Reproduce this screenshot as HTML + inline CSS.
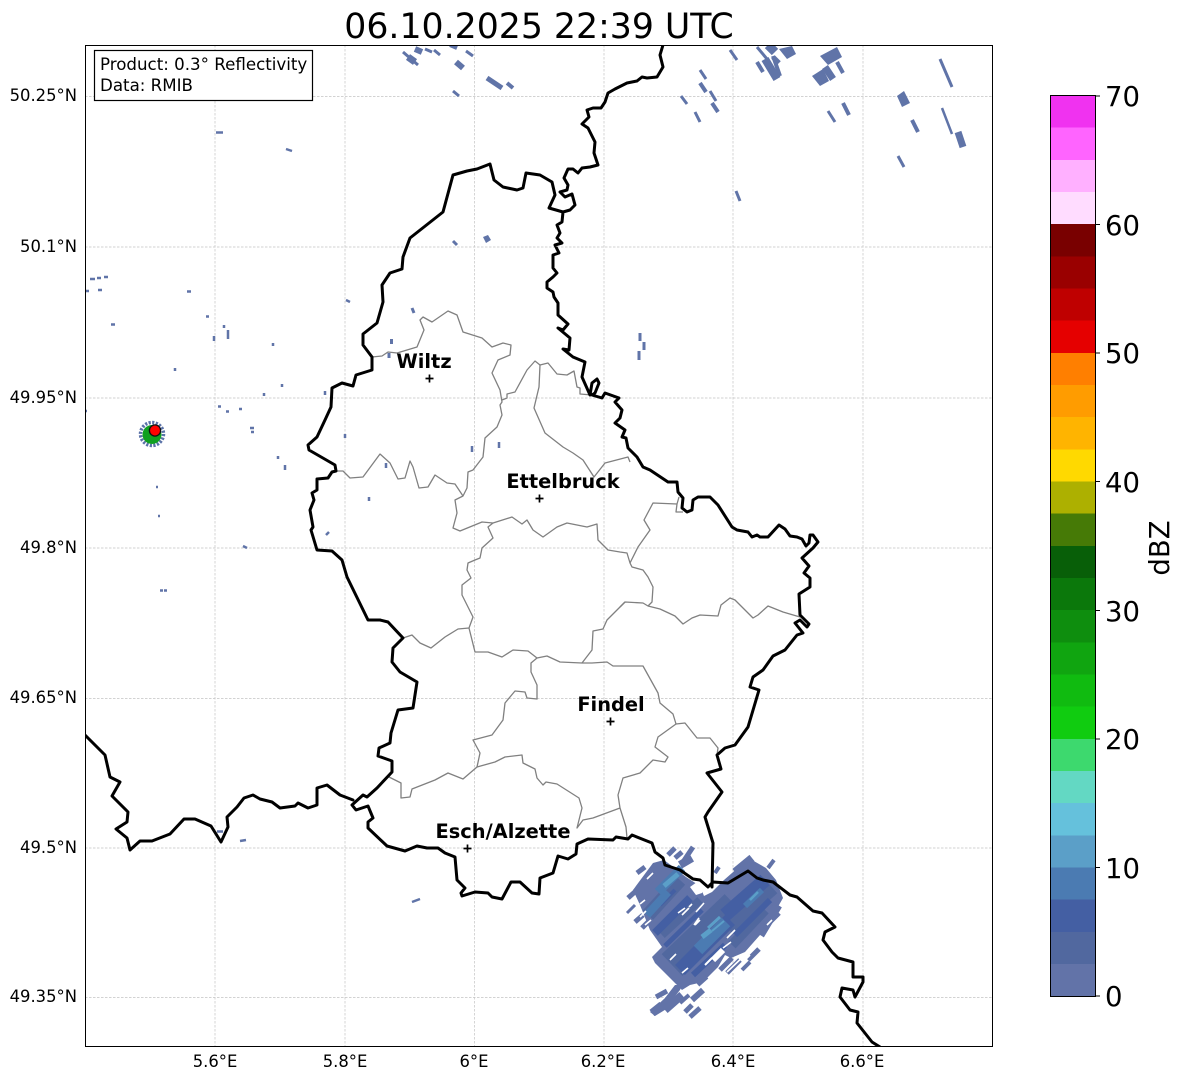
<!DOCTYPE html>
<html><head><meta charset="utf-8"><style>
html,body{margin:0;padding:0;background:#fff}
svg{display:block;font-family:"DejaVu Sans",sans-serif}
</style></head><body>
<svg width="1184" height="1081" viewBox="0 0 1184 1081" xmlns="http://www.w3.org/2000/svg">
<defs><clipPath id="ax"><rect x="85" y="45" width="907" height="1001"/></clipPath></defs>
<rect width="1184" height="1081" fill="#fff"/>
<text x="539" y="38" font-size="34.7" text-anchor="middle">06.10.2025 22:39 UTC</text>
<g clip-path="url(#ax)">
<!-- grid -->
<g stroke="#c4c4c4" stroke-width="0.7" stroke-dasharray="2.5 1.5" fill="none">
<path d="M215,45V1046M345,45V1046M474.5,45V1046M604,45V1046M733,45V1046M863,45V1046"/>
<path d="M85,96.5H992M85,247H992M85,398H992M85,548H992M85,698.5H992M85,848H992M85,997.5H992"/>
</g>
<!-- radar: top streaks -->
<g stroke="#6074a8" fill="none">
<g stroke-width="3">
<path d="M730,50L737,60M700,70L706,79M710,91L716,101M681,96L687,104M695,112L700,122M757,47L767,59M828,111L835,122M898,156L904,167M736,191L740,201M940,59L952,87M403,52L418,65M434,50L440,55M466,51L473,56M453,91L459,96"/>
</g>
<g stroke-width="4">
<path d="M700,83L706,92M712,103L718,112M757,62L763,72M773,56L780,76M837,62L843,73M843,103L849,115M912,120L918,132M450,45L457,48M507,83L513,88"/>
</g>
<path d="M765,59L777,79" stroke-width="8"/>
<path d="M768,45L775,52" stroke-width="9"/>
<path d="M773,57L779,63" stroke-width="5"/>
<path d="M825,67L833,79" stroke-width="7"/>
<path d="M942,108L952,134" stroke-width="2.5"/>
<path d="M958,132L963,147" stroke-width="7"/>
<path d="M408,57L415,62" stroke-width="7"/>
<path d="M415,49L422,52" stroke-width="6"/>
<path d="M425,49L432,52" stroke-width="3"/>
<path d="M456,62L463,68" stroke-width="6"/>
<path d="M487,78L502,88" stroke-width="5"/>
<path d="M453,241L457,245" stroke-width="3"/>
</g>
<g fill="#6074a8">
<polygon points="779,49 792,46 796,54 787,59"/>
<polygon points="820,56 837,47 842,57 828,65"/>
<polygon points="812,76 823,69 829,81 820,86"/>
<polygon points="897,96 904,91 910,103 902,107"/>
<polygon points="483,237 488,235 491,240 486,243"/>
</g>
<!-- scattered pixels -->
<g stroke="#6074a8" stroke-width="2.5" fill="none">
<path d="M216,132.5H223M286,149L292,151M90,279H95M97,278H101M104,277H108M85,291H89M98,290H102M111,324.5H115M187,291.5H191M206,316.5H209M224,325V328M228,330V339M214,336V341M273,343V346M346,300L350,302M175,368V371M282,384V387M264,393V396M218,406.5H221M226,411.5H229M239,409H242M250,428H254M251,432H254M278,456V459M285,465V470M156,487H158M158,516H160M243,546L247,548M160,590.5H163M164,590.5H167M85,411H87"/>
<path d="M325,391V395M345,434V438M472,446V452M499,442V448M386,463V468M369,497V501M326,535L329,532M217,831.5H223M240,841L246,840M412,902L420,899"/>
<path d="M412,308L414,313M391.5,339V344M389,353V358M640,333V341M644,342V350M639,351V360" stroke-width="3"/>
</g>
<!-- heart echo -->
<polygon fill="#6273a8" points="653,863 664,860 672,866 686,877 700,886 704,896 712,892 724,880 740,866 752,860 766,868 776,880 783,898 775,912 760,935 745,952 731,958 725,955 718,967 703,982 690,985 682,990 672,980 655,963 652,957 662,947 650,930 640,905 633,890"/>
<polygon fill="#6273a8" points="682,985 680,990 672,1000 668,1008 655,1016 650,1012 665,998 675,985"/>
<g stroke="#6273a8" fill="none">
<g stroke-width="5">
<path d="M637,873L645,867M628,898L637,890M635,922L643,915M642,928L648,922M668,855L675,848M675,858L682,852M683,862L693,847M770,922L779,913M748,960L759,949M727,973L740,960M720,970L732,958M656,997L667,991M690,1017L700,1008M685,1012L692,1005"/>
</g>
<path d="M627,913L635,905" stroke-width="3"/>
<path d="M680,865L692,858M735,872L752,858M652,1013L662,1005M665,1010L682,995" stroke-width="8"/>
<path d="M715,873L719,867M768,868L774,860M742,970L750,962M698,985L707,977M680,1003L689,995" stroke-width="4"/>
<path d="M692,1000L703,990" stroke-width="6"/>
<path d="M645,883L655,875M760,935L778,905" stroke-width="9"/>
</g>
<g stroke="#51689f" fill="none">
<path d="M648,915L680,880" stroke-width="14"/>
<path d="M662,935L700,900" stroke-width="8"/>
<path d="M672,965L735,905" stroke-width="30"/>
<path d="M725,925L770,885" stroke-width="22"/>
<path d="M732,945L765,910" stroke-width="10"/>
</g>
<g stroke="#445fa3" fill="none">
<path d="M655,933L690,898" stroke-width="8"/>
<path d="M665,946L702,910" stroke-width="5"/>
<path d="M680,970L730,920" stroke-width="14"/>
<path d="M660,905L675,890" stroke-width="4"/>
<path d="M725,915L765,880" stroke-width="14"/>
<path d="M735,935L770,900" stroke-width="6"/>
<path d="M693,975L725,945" stroke-width="6"/>
</g>
<g stroke="#4b7bb2" fill="none">
<path d="M647,915L668,892" stroke-width="8"/>
<path d="M658,892L682,868" stroke-width="9"/>
<path d="M698,950L726,922" stroke-width="12"/>
<path d="M745,906L762,890" stroke-width="6"/>
</g>
<g stroke="#5b9fc8" fill="none">
<path d="M664,886L678,874" stroke-width="5"/>
<path d="M708,928L720,917" stroke-width="3"/>
<path d="M712,931L724,921" stroke-width="2"/>
<path d="M702,937L711,930" stroke-width="5"/>
<path d="M750,900L758,892" stroke-width="2.5"/>
</g>
<polygon fill="#fff" points="690,887 697,882 704,888 702,893 696,895"/>
<g stroke="#fff" fill="none" stroke-width="1.6">
<path d="M678,913L685,908M695,925L700,920M682,915L689,908M696,912L704,903M727,938L735,930M723,948L731,942M682,973L688,968M727,972L747,953M733,972L750,955M767,925L772,920M647,879L653,873M640,904L645,900M645,925L651,920M640,917L646,911M670,960L676,954M703,890L708,885M694,925L699,918M689,907L692,904"/>
<path d="M713,960L723,950" stroke-width="6"/>
<path d="M705,965L712,958" stroke-width="2"/>
</g>
<!-- radar marker -->
<circle cx="152" cy="434" r="11.5" fill="none" stroke="#5a72a8" stroke-width="3.5" stroke-dasharray="2.2 1.4"/>
<circle cx="152" cy="434.5" r="9.5" fill="#10a020"/>
<circle cx="155" cy="430.5" r="5.6" fill="#f00" stroke="#111" stroke-width="1.3"/>
<!-- admin borders -->
<g fill="none" stroke="#808080" stroke-width="1.3" stroke-linejoin="round">
<path d="M372,357L382,356 388,352 397,353 417,347 424,330 420,320 423,317 432,322 448,311 457,315 463,332 482,338 492,347 503,343 511,345 510,355 498,360 492,373 500,390 502,402 500,405 502,415 497,427 485,438 483,457 473,470 468,472 467,488 463,496 455,500 457,513 453,528 460,531 482,522 493,523 512,517 522,524 527,520 533,530 543,537 557,527 567,523 587,527 597,524 598,540 608,550 620,552 627,553 630,563 632,567 643,570 648,577 653,587 652,602 648,606"/>
<path d="M336,471L343,471 350,478 363,477 380,454 390,463 398,479 405,478 410,461 413,467 419,488 428,487 435,475 447,483 455,484 463,496"/>
<path d="M502,400L507,398 507,394 515,392 527,370 535,361 540,365 548,363 557,374 567,375 574,371 577,387 580,388 580,394 592,395"/>
<path d="M540,365L539,387 534,408 545,433 563,447 573,453 583,460 594,477 605,463 628,457 630,462"/>
<path d="M630,563L638,547 650,530 644,520 653,503 677,504 676,512 683,512M677,504L679,497"/>
<path d="M620,607L625,602 643,603 648,606 660,609 675,616 683,624 692,618 700,615 718,616 721,605 730,598 735,600 753,618 758,615 768,606 783,612 800,617"/>
<path d="M493,523L488,527 493,538 482,548 480,558 475,560 468,563 467,570 471,578 462,585 462,595 473,617 469,628 458,629 445,637 431,648 420,643 412,635 403,638M469,628L475,652 488,652 502,657 513,650 528,651 537,658 547,656 560,662 582,663 592,663 607,662 613,666 643,666 658,693 660,703 673,714 676,724 685,723 697,738 710,738 718,748 717,755"/>
<path d="M676,724L658,737 655,747 668,757 665,762 653,760 640,773 623,778 618,795 620,808 626,827 627,838"/>
<path d="M620,808L593,818 583,820 577,828 582,808 579,798 557,784 546,782 543,785 537,778 535,769 523,763 522,755 505,757 495,762 477,767 480,753 473,740 492,735 503,720 505,703 515,691 525,692 527,698 537,699 537,685 531,672 531,663 537,658"/>
<path d="M477,767L463,779 448,773 435,780 412,789 410,797 401,798 401,783 389,777"/>
<path d="M582,663L592,650 593,631 603,629 607,620 625,602"/>
</g>
<!-- national borders -->
<g fill="none" stroke="#000" stroke-width="3" stroke-linejoin="round" stroke-linecap="round">
<path d="M85,735L105,755 110,777 120,782 112,796 128,812 127,822 116,829 127,838 130,850 140,841 152,841 170,834 184,819 195,819 211,826 221,842 228,827 227,817 237,807 244,798 253,795 260,799 272,802 280,808 295,806 298,803 308,808 317,805 317,788 327,785 340,795 353,800"/>
<path d="M563,212L549,208 555,195 552,182 540,175 526,173 523,188 517,190 503,187 494,180 490,164 477,169 467,171 453,175 443,212 410,238 403,257 402,269 390,273 382,285 383,302 377,323 363,334 363,345 372,357 372,370 356,375 353,386 342,383 332,388 331,407 325,420 317,437 308,445 309,450 335,465 336,471 332,472 328,478 317,479 317,490 312,493 314,500 310,510 313,527 311,530 317,550 332,551 342,560 347,577 368,620 380,620 388,622 403,638 393,648 392,662 400,672 417,682 413,708 398,710 391,733 390,743 379,748 378,756 392,761 392,772 377,788 367,797 363,795 352,805 356,810 368,806 373,818 368,822 368,828 387,846 405,851 417,846 427,848 438,848 445,853 455,857 457,880 465,888 461,893 462,896 475,892 488,893 492,897 502,899 511,882 520,882 532,893 539,894 540,878 553,873 558,856 568,859 576,854 577,844 588,839 613,840 616,837 628,839 632,835 652,843 655,852 663,858 665,865 680,870 693,879 700,880 708,887 713,882 728,883 748,871 757,878 763,880 773,882 790,895 797,897 813,911 822,913 835,927 825,932 823,940 832,952 838,958 853,962 853,977 863,977 863,982 855,997 853,990 842,988 840,997 850,1010 858,1012 857,1023 872,1042 880,1047"/>
<path d="M712,887L713,843 705,817 708,812 722,792 707,773 721,769 717,755 725,748 735,745 748,727 759,690 750,687 753,677 763,670 773,656 785,650 797,635 803,633 795,623 800,620 807,627 809,624 800,615 799,594 810,587 810,578 804,573 809,566 802,558 813,548 818,542 813,535 810,535 809,543 806,546 802,539 797,537 790,536 785,529 779,525 768,537 760,537 757,535 752,537 748,532 737,530 732,527 718,505 710,497 698,497 693,500 692,510 687,512 682,508 683,498 678,492 677,482 668,482 650,470 643,467 637,457 628,448 626,438 622,437 625,430 615,423 620,418 622,410 615,402 619,398 605,393 602,398 592,395 595,393 599,383 597,379 592,383 590,395 582,377 585,362 573,357 563,349 569,350 570,338 558,328 563,330 568,324 558,315 558,303 554,297 553,292 547,288 547,282 553,277 557,273 553,268 553,255 559,253 555,245 562,243 557,238 560,233 557,225 562,222 563,212 570,210 575,205 572,194 565,197 560,192 567,190 568,185 564,178 568,169 573,169 578,173 582,168 590,167 598,165 594,153 595,142 588,128 582,124 589,117 587,110 593,108 601,108 605,102 608,93 615,89 627,83 637,81 642,77 647,78 657,77 663,67 660,55 663,45"/>
</g>
<!-- cities -->
<g stroke="#000" stroke-width="1.7" fill="none">
<path d="M425.5,378.5H433.5M429.5,374.5V382.5"/>
<path d="M535.5,498.5H543.5M539.5,494.5V502.5"/>
<path d="M606.5,721.5H614.5M610.5,717.5V725.5"/>
<path d="M463.5,848.5H471.5M467.5,844.5V852.5"/>
</g>
<g font-size="19.4" font-weight="bold" text-anchor="middle">
<text x="424" y="368">Wiltz</text>
<text x="563" y="488">Ettelbruck</text>
<text x="611" y="711">Findel</text>
<text x="503" y="838">Esch/Alzette</text>
</g>
<!-- legend -->
<rect x="94.5" y="50.5" width="218" height="50" fill="#fff" stroke="#000" stroke-width="1.2"/>
<text x="100" y="70" font-size="16.67">Product: 0.3° Reflectivity</text>
<text x="100" y="91" font-size="16.67">Data: RMIB</text>
</g>
<rect x="85.5" y="45.5" width="907" height="1001" fill="none" stroke="#000" stroke-width="1"/>
<!-- tick labels -->
<g font-size="16.4" text-anchor="end">
<text x="77" y="101">50.25°N</text>
<text x="77" y="252">50.1°N</text>
<text x="77" y="403">49.95°N</text>
<text x="77" y="553">49.8°N</text>
<text x="77" y="703">49.65°N</text>
<text x="77" y="853">49.5°N</text>
<text x="77" y="1002">49.35°N</text>
</g>
<g font-size="16.4" text-anchor="middle">
<text x="215" y="1067">5.6°E</text>
<text x="345" y="1067">5.8°E</text>
<text x="474" y="1067">6°E</text>
<text x="603" y="1067">6.2°E</text>
<text x="733" y="1067">6.4°E</text>
<text x="862" y="1067">6.6°E</text>
</g>
<!-- colorbar -->
<g shape-rendering="crispEdges">
<rect x="1050" y="95.5" width="45.5" height="32.5" fill="#f032f0"/>
<rect x="1050" y="127.7" width="45.5" height="32.5" fill="#ff64ff"/>
<rect x="1050" y="159.9" width="45.5" height="32.5" fill="#ffb0ff"/>
<rect x="1050" y="192" width="45.5" height="32.5" fill="#ffdcff"/>
<rect x="1050" y="224.2" width="45.5" height="32.5" fill="#790000"/>
<rect x="1050" y="256.4" width="45.5" height="32.5" fill="#9a0000"/>
<rect x="1050" y="288.5" width="45.5" height="32.5" fill="#bf0000"/>
<rect x="1050" y="320.7" width="45.5" height="32.5" fill="#e50000"/>
<rect x="1050" y="352.9" width="45.5" height="32.5" fill="#ff7f00"/>
<rect x="1050" y="385" width="45.5" height="32.5" fill="#ff9c00"/>
<rect x="1050" y="417.2" width="45.5" height="32.5" fill="#ffb400"/>
<rect x="1050" y="449.4" width="45.5" height="32.5" fill="#ffd900"/>
<rect x="1050" y="481.5" width="45.5" height="32.5" fill="#adb000"/>
<rect x="1050" y="513.7" width="45.5" height="32.5" fill="#467a06"/>
<rect x="1050" y="545.9" width="45.5" height="32.5" fill="#085f08"/>
<rect x="1050" y="578" width="45.5" height="32.5" fill="#0b780b"/>
<rect x="1050" y="610.2" width="45.5" height="32.5" fill="#0e8e0e"/>
<rect x="1050" y="642.4" width="45.5" height="32.5" fill="#10a510"/>
<rect x="1050" y="674.5" width="45.5" height="32.5" fill="#10bb10"/>
<rect x="1050" y="706.7" width="45.5" height="32.5" fill="#10cc10"/>
<rect x="1050" y="738.9" width="45.5" height="32.5" fill="#3dd96e"/>
<rect x="1050" y="771" width="45.5" height="32.5" fill="#63d8c3"/>
<rect x="1050" y="803.2" width="45.5" height="32.5" fill="#65c1dc"/>
<rect x="1050" y="835.4" width="45.5" height="32.5" fill="#5b9fc8"/>
<rect x="1050" y="867.5" width="45.5" height="32.5" fill="#4b7bb2"/>
<rect x="1050" y="899.7" width="45.5" height="32.5" fill="#445fa3"/>
<rect x="1050" y="931.9" width="45.5" height="32.5" fill="#51689f"/>
<rect x="1050" y="964" width="45.5" height="32" fill="#6273a8"/>
</g>
<rect x="1050.5" y="95.5" width="45" height="901" fill="none" stroke="#000" stroke-width="1"/>
<path d="M1095,96H1100M1095,224.5H1100M1095,353H1100M1095,481.5H1100M1095,610.5H1100M1095,739H1100M1095,867.5H1100M1095,996H1100" stroke="#000" stroke-width="1"/>
<g font-size="27.5">
<text x="1105" y="106">70</text>
<text x="1105" y="235">60</text>
<text x="1105" y="363">50</text>
<text x="1105" y="492">40</text>
<text x="1105" y="621">30</text>
<text x="1105" y="749">20</text>
<text x="1105" y="878">10</text>
<text x="1105" y="1006">0</text>
</g>
<text transform="translate(1169,548) rotate(-90)" font-size="27.5" text-anchor="middle">dBZ</text>
</svg>
</body></html>
